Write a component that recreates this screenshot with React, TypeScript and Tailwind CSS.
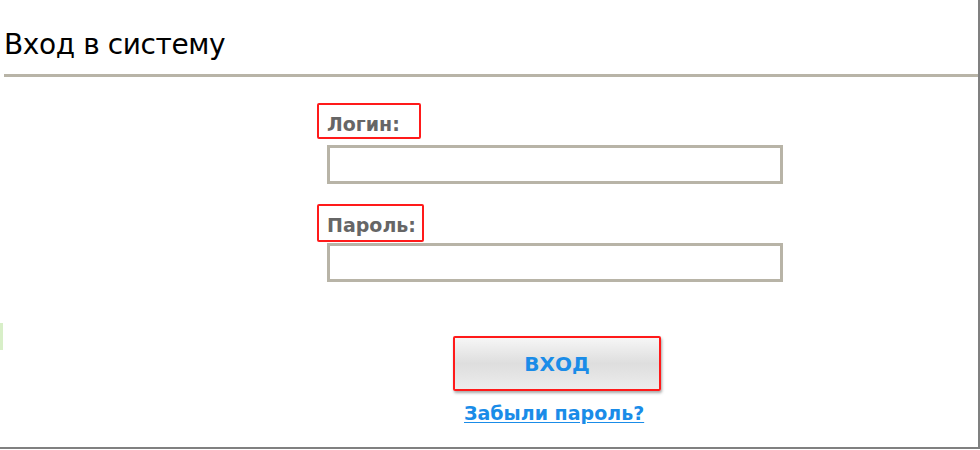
import React from 'react'

export default function App() {
  return (
    <div className="relative w-[980px] h-[450px] bg-white overflow-hidden" style={{ fontFamily: '"DejaVu Sans", Verdana, sans-serif' }}>
      <div className="w-[980px] h-[449px] border-r-2 border-b-2 border-[#808080]">
        {/* header */}
        <h1 className="pl-[4px] pt-[29px] text-[28px] leading-[32px] text-black tracking-[-0.4px]">Вход в систему</h1>
        <div className="ml-[4px] mt-[13px] h-[3px] bg-[#b8b4a7]" />

        {/* form */}
        <div className="pl-[317px] pt-[26px] flex flex-col">
          <div className="w-[104px] h-[36px] border-2 border-[#ff1a1a] rounded-[2px] pl-[8px] pt-[9px] text-[19px] leading-[21px] font-bold text-[#666666]">
            Логин:
          </div>
          <input className="ml-[10px] mt-[6px] w-[456px] h-[39px] border-[3px] border-[#b8b4a7] outline-none" />

          <div className="mt-[20px] w-[107px] h-[38px] border-2 border-[#ff1a1a] rounded-[2px] pl-[8px] pt-[9px] text-[19px] leading-[21px] font-bold text-[#666666]">
            Пароль:
          </div>
          <input className="ml-[10px] mt-[1px] w-[456px] h-[39px] border-[3px] border-[#b8b4a7] outline-none" />

          <div className="ml-[136px] mt-[54px] w-[208px] h-[55px] border-2 border-[#ff1a1a] rounded-[2px] shadow-[1px_2px_3px_rgba(0,0,0,0.35)]">
            <button className="w-full h-full bg-gradient-to-b from-[#f6f6f6] via-[#dedede] to-[#ececec] text-[20px] font-bold text-[#1a8ce8] leading-none">
              ВХОД
            </button>
          </div>
          <a href="#" className="ml-[147px] mt-[11px] text-[19px] leading-[23px] font-bold text-[#1a8ce8] underline underline-offset-2 w-fit">
            Забыли пароль?
          </a>
        </div>
      </div>
      <div className="absolute left-0 top-[323px] w-[3px] h-[27px] bg-[#d8efc8]" />
    </div>
  )
}
